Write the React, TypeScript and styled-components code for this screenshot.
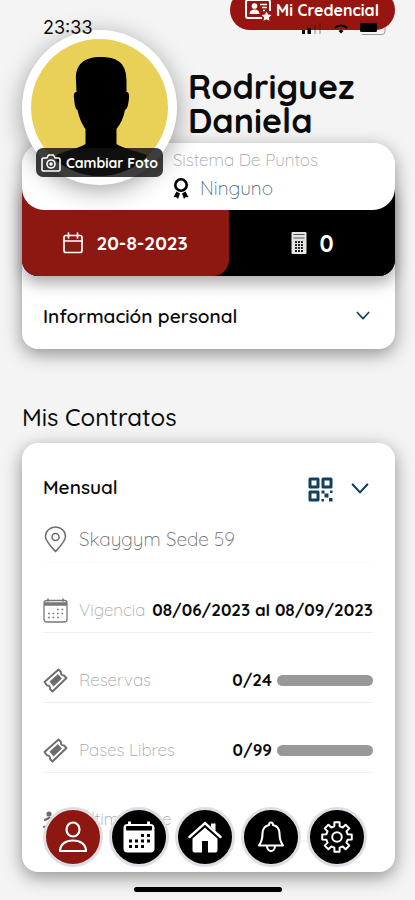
import React from "react";
import styled, { createGlobalStyle } from "styled-components";

const red = "#8c1811";
const navy = "#12405f";

const GlobalStyle = createGlobalStyle`
  * { box-sizing: border-box; }
  body {
    margin: 0;
    background: #f4f4f4;
    color: #0b0b0b;
    font-family: Quicksand, Lato, "Open Sans", sans-serif;
  }
  button { font-family: inherit; border: 0; padding: 0; background: none; cursor: pointer; }
  h1, h2, h3, p { margin: 0; padding: 0; }
  svg { display: block; flex: none; }
`;

const Page = styled.main`
  position: relative;
  min-height: 100vh;
  padding: 0 20px 28px 22px;
  overflow: hidden;
`;

const StatusBar = styled.header`
  display: flex;
  justify-content: space-between;
  align-items: flex-end;
  height: 38px;
  padding: 0 8px 0 21px;
`;

const Clock = styled.time`
  position: relative;
  z-index: 4;
  font-family: Inter, sans-serif;
  font-size: 18px;
  line-height: 20px;
`;

const StatusIcons = styled.div`
  position: relative;
  z-index: 4;
  display: flex;
  align-items: flex-start;
  gap: 12px;
  height: 15px;
`;

const CredentialButton = styled.button`
  position: absolute;
  z-index: 3;
  top: -10px;
  right: 20px;
  display: flex;
  align-items: center;
  gap: 4px;
  height: 40px;
  padding: 0 16px 0 15px;
  border-radius: 20px;
  background: #961510;
  color: #fff;
  font-size: 16px;
  font-weight: 700;
  white-space: nowrap;
`;

const Profile = styled.section`
  position: relative;
`;

const AvatarFrame = styled.div`
  position: absolute;
  z-index: 3;
  top: -8px;
  left: 0;
  width: 155px;
  height: 155px;
  padding: 9px;
  border-radius: 50%;
  background: #fff;
  box-shadow: 0 5px 24px rgba(0, 0, 0, 0.36);

  svg { border-radius: 50%; }
`;

const PhotoButton = styled.button`
  position: absolute;
  z-index: 4;
  top: 110px;
  left: 14px;
  display: flex;
  align-items: center;
  justify-content: center;
  gap: 5px;
  width: 127px;
  height: 29px;
  border-radius: 7px;
  background: rgba(18, 18, 18, 0.82);
  color: #fff;
  font-size: 14px;
  font-weight: 700;
  white-space: nowrap;
`;

const Name = styled.h1`
  height: 105px;
  padding: 32px 0 0 166px;
  font-size: 34px;
  font-weight: 700;
  line-height: 34px;
`;

const Card = styled.div`
  border-radius: 16px;
  background: #fff;
  box-shadow: 0 5px 18px rgba(0, 0, 0, 0.42);
`;

const ProfileCard = styled(Card)`
  border-radius: 22px 22px 16px 16px;
`;

const Points = styled.div`
  position: relative;
  z-index: 2;
  height: 67px;
  padding: 6px 0 0 151px;
  border-radius: 22px;
  background: #fff;
`;

const PointsLabel = styled.p`
  color: #a6a6a6;
  font-size: 17px;
  font-weight: 300;
  line-height: 22px;
`;

const PointsValue = styled.p`
  display: flex;
  align-items: center;
  gap: 11px;
  padding-top: 4px;
  color: #4d6878;
  font-size: 19px;
  font-weight: 300;
  line-height: 26px;
`;

const Stats = styled.div`
  display: grid;
  grid-template-columns: 5fr 4fr;
  height: 90px;
  margin-top: -24px;
  border-radius: 0 0 16px 16px;
  background: #000;
  box-shadow: 0 7px 16px rgba(0, 0, 0, 0.34);
`;

const Stat = styled.div<{ $accent?: boolean }>`
  display: flex;
  align-items: center;
  justify-content: center;
  gap: 13px;
  padding-top: 24px;
  border-radius: 0 0 16px 16px;
  background: ${(p) => (p.$accent ? red : "#000")};
  color: #fff;
  font-size: ${(p) => (p.$accent ? "19px" : "23px")};
  font-weight: 700;
`;

const InfoToggle = styled.button`
  display: flex;
  align-items: center;
  justify-content: space-between;
  width: 100%;
  height: 73px;
  padding: 6px 25px 0 21px;
  color: #0b0b0b;
  font-size: 19px;
  font-weight: 600;
`;

const SectionTitle = styled.h2`
  margin: 54px 0 11px;
  font-size: 24px;
  font-weight: 500;
  line-height: 29px;
`;

const ContractCard = styled(Card)`
  padding: 30px 22px 39px 21px;
`;

const ContractHeader = styled.div`
  display: flex;
  align-items: center;
  justify-content: space-between;
  height: 28px;
`;

const ContractName = styled.h3`
  font-size: 19px;
  font-weight: 600;
`;

const Actions = styled.div`
  display: flex;
  align-items: center;
  gap: 18px;
  padding: 4px 4px 0 0;
`;

const Row = styled.div<{ $first?: boolean; $last?: boolean }>`
  display: flex;
  align-items: center;
  padding: ${(p) => (p.$first ? "24px 0 9px" : p.$last ? "32px 0 0" : "33px 0 8px")};
  border-bottom: ${(p) => (p.$last ? "0" : `1px solid ${p.$first ? "#fafafa" : "#f0f0f0"}`)};
  font-size: 17px;
  line-height: 28px;
  white-space: nowrap;
`;

const RowLabel = styled.span<{ $dark?: boolean }>`
  margin-left: 11px;
  color: ${(p) => (p.$dark ? "#6a6a6a" : "#a9a9a9")};
  font-size: ${(p) => (p.$dark ? "19px" : "17px")};
  font-weight: 300;
`;

const RowValue = styled.span`
  margin-left: auto;
  font-weight: 700;
`;

const Meter = styled.span`
  width: 96px;
  height: 11px;
  margin-left: 5px;
  border-radius: 6px;
  background: #989898;
`;

const TabBar = styled.nav`
  position: fixed;
  z-index: 5;
  bottom: 33px;
  left: 43px;
  display: flex;
  gap: 6px;
`;

const Tab = styled.button<{ $active?: boolean }>`
  display: grid;
  place-items: center;
  width: 60px;
  height: 60px;
  border: 3px solid #dedee3;
  border-radius: 50%;
  background: ${(p) => (p.$active ? red : "#000")};
  color: #fff;
`;

const HomeIndicator = styled.div`
  position: fixed;
  bottom: 8px;
  left: 50%;
  width: 148px;
  height: 5px;
  margin-left: -74px;
  border-radius: 3px;
  background: #000;
`;

const Chevron = ({ size, color }: { size: number; color: string }) => (
  <svg width={size} height={size} viewBox="0 0 16 16" fill="none" stroke={color} strokeWidth="1.9" strokeLinecap="round" strokeLinejoin="round">
    <path d="M1.500 4 8 11 14.500 4" />
  </svg>
);

const CredentialIcon = () => (
  <svg width="27" height="24" viewBox="0 0 27 24" fill="none" stroke="#fff" strokeWidth="2">
    <path d="M17 20H3a2 2 0 0 1-2-2V4a2 2 0 0 1 2-2h20a2 2 0 0 1 2 2v9" />
    <circle cx="9.500" cy="8" r="2.800" fill="#fff" stroke="none" />
    <path d="M4.500 16c0-3 2-4.500 5-4.500s5 1.500 5 4.500z" fill="#fff" stroke="none" />
    <path d="M15 6.500h7M17 9.500h5M18 12.500h2" strokeWidth="1.400" />
    <path d="m21.500 13.500 1.500 3 3.400.5-2.500 2.400.6 3.400-3-1.600-3 1.600.6-3.400-2.500-2.400 3.400-.5z" fill="#fff" stroke="none" />
  </svg>
);

const Signal = () => (
  <svg width="20" height="11" viewBox="0 0 20 11">
    <path d="M0 7h3v4H0zM5.500 5h3.500v6H5.500z" fill="#000" />
    <path d="M12 2h2v9h-2zM17 0h2v11h-2z" fill="#000" opacity=".22" />
  </svg>
);

const Wifi = () => (
  <svg width="14" height="11" viewBox="0 0 14 11">
    <path d="M1 5a8.500 8.500 0 0 1 12 0" fill="none" stroke="#000" strokeWidth="2.200" />
    <path d="M7 10.500 4.500 8a4 4 0 0 1 5 0z" fill="#000" />
  </svg>
);

const Battery = () => (
  <svg width="27" height="13" viewBox="0 0 27 13">
    <path d="M2 11.500h20a3 3 0 0 0 3-3V4" fill="none" stroke="#999" strokeWidth="1" />
    <rect x="0" y="0" width="17" height="9" rx="1.500" fill="#000" />
  </svg>
);

const Silhouette = () => (
  <svg width="137" height="137" viewBox="0 0 137 137" role="img" aria-label="Foto de perfil">
    <rect width="137" height="137" fill="#e9d158" />
    <path d="M70 18c-19 0-26 9-25 24l.500 11c-2.500 0-3 3-2.500 6 .500 5 1 11 3.500 12 2 9 5 15 8 19v15c-6 4-18 6-29 11v25h90v-25c-13-5-24-7-30-11V90c4-5 7-11 8.500-19 3-1 3.500-8 4-12 .3-4-.5-6-2.500-6V42c0-16-7-24-25.500-24z" fill="#000" />
  </svg>
);

const Camera = () => (
  <svg width="20" height="18" viewBox="0 0 20 18" fill="none" stroke="#fff" strokeWidth="1.600" strokeLinejoin="round">
    <path d="M1 5.500a1.500 1.500 0 0 1 1.500-1.500H6l1.500-3h5L14 4h3.500A1.500 1.500 0 0 1 19 5.500v10a1.500 1.500 0 0 1-1.500 1.500h-15A1.500 1.500 0 0 1 1 15.500z" />
    <circle cx="10" cy="10" r="4" />
    <circle cx="10" cy="10" r="1" />
  </svg>
);

const Award = () => (
  <svg width="16" height="21" viewBox="0 0 16 21">
    <circle cx="8" cy="7" r="5.700" fill="none" stroke="#000" strokeWidth="2.600" />
    <path d="m3.500 13.500 3.500 2-2 5.500-1.800-2-2.700.3zM12.500 13.500l-3.500 2 2 5.500 1.800-2 2.700.3z" fill="#000" />
  </svg>
);

const OutlineCalendar = () => (
  <svg width="20" height="22" viewBox="0 0 20 22" fill="none" stroke="#fff" strokeWidth="1.700" strokeLinecap="round">
    <rect x="1" y="3.500" width="18" height="17" rx="2" />
    <path d="M1 9h18M5.500 1v5M14.500 1v5" />
  </svg>
);

const Calculator = () => (
  <svg width="16" height="22" viewBox="0 0 16 22">
    <rect x=".500" width="15" height="22" rx="1" fill="#e4e4e4" />
    <path d="M2.500 2.500h11M2.500 6h11" stroke="#555" strokeWidth="1" />
    <path d="M4 10h8M4 13h8M4 16h8M4 19h8" stroke="#222" strokeWidth="1.800" strokeDasharray="2 1" />
  </svg>
);

const QrCode = () => (
  <svg width="25" height="25" viewBox="0 0 25 25" fill="none" stroke={navy} strokeWidth="3">
    <path d="M2 2h8v8H2zM15 2h8v8h-8zM2 15h8v8H2z" strokeLinejoin="round" />
    <path d="M13.500 13.500h3v3h-3zM16.500 16.500h4v4h-4zM22 13.500h2.500v2.500H22zM13.500 22H16v2.500h-2.500zM21 21h3.500v3.500H21z" fill={navy} stroke="none" />
  </svg>
);

const Pin = () => (
  <svg width="25" height="27" viewBox="0 0 25 27" fill="none" stroke="#6c6c6c" strokeWidth="1.500">
    <path d="M12.500 25.500C7 19.500 2.500 15 2.500 10.500a10 9.500 0 0 1 20 0c0 4.500-4.500 9-10 15z" />
    <circle cx="12.500" cy="11" r="3.500" />
  </svg>
);

const ValidityIcon = () => (
  <svg width="25" height="25" viewBox="0 0 25 25" fill="none" stroke="#777">
    <rect x="1" y="2.500" width="23" height="21.500" rx="2.500" strokeWidth="1.300" />
    <path d="M1 6h23" strokeWidth="3.500" />
    <path d="M5 .500v3M20 .500v3" strokeWidth="1.600" />
    <g strokeWidth="1.700">
      <path d="M14 11.500h1.700M18.500 11.500h1.700" />
      <path d="M5 15.500h1.700M9.500 15.500h1.700M14 15.500h1.700M18.500 15.500h1.700" />
      <path d="M5 19.500h1.700M9.500 19.500h1.700M14 19.500h1.700" />
    </g>
  </svg>
);

const ScheduleIcon = () => (
  <svg width="32" height="32" viewBox="0 0 32 32">
    <rect x=".500" y="3" width="31" height="28.500" rx="4" fill="#fff" />
    <path d="M5 .500h3V4H5zM24 .500h3V4h-3z" fill="#fff" />
    <rect x="3" y="5" width="26" height="4.500" rx="1" fill="#000" />
    <g stroke="#000" strokeWidth="3">
      <path d="M18 14.500h3M24 14.500h3" />
      <path d="M6 20h3M12 20h3M18 20h3M24 20h3" />
      <path d="M6 25.500h3M12 25.500h3M18 25.500h3" />
    </g>
  </svg>
);

const Ticket = () => (
  <svg width="25" height="25" viewBox="0 0 25 25" fill="none" stroke="#6c6c6c" strokeWidth="1.900" strokeLinejoin="round">
    <path d="M1.500 14 15.500 1.500l2.500 2.500c-.5 2 .5 3.500 3 3.500L23.500 10 9.500 23.500 7 21c.5-2-1-4-3-3.500z" />
    <path d="M7 13.500 15 6.500l3.500 4-8 7.500z" fill="#6c6c6c" strokeWidth=".8" />
  </svg>
);

const Runner = () => (
  <svg width="25" height="25" viewBox="0 0 25 25" fill="none" stroke="#6c6c6c" strokeWidth="2.200" strokeLinecap="round">
    <circle cx="6" cy="7" r="1.500" fill="#6c6c6c" />
    <path d="m2 13 4-2 6 1 4 5M9 13l-4 6-4 1M9 18l5 5" />
  </svg>
);

const PersonIcon = () => (
  <svg width="30" height="32" viewBox="0 0 30 32" fill="none" stroke="#fff" strokeWidth="2.200">
    <ellipse cx="15" cy="8.500" rx="6.500" ry="7" />
    <path d="M2 30C2 23 8 19.500 15 19.500S28 23 28 30z" strokeLinejoin="round" />
  </svg>
);

const HouseIcon = () => (
  <svg width="34" height="32" viewBox="0 0 34 32">
    <path d="M23 2.500h4.500V10L23 6z" fill="#fff" />
    <path d="M4.500 17 17 6l12.500 11v12.500q0 2-2 2H20V20h-6v11.500H6.500q-2 0-2-2z" fill="#fff" />
    <path d="M1.500 18 17 4.500 32.500 18" fill="none" stroke="#000" strokeWidth="3" />
    <path d="M1.500 16 17 2.200 32.500 16" fill="none" stroke="#fff" strokeWidth="2.400" strokeLinecap="round" />
  </svg>
);

const BellIcon = () => (
  <svg width="28" height="32" viewBox="0 0 28 32" fill="none" stroke="#fff" strokeWidth="2.100" strokeLinejoin="round">
    <path d="M14 1.500c-1.500 0-2 1-2 2.500-4 1-6.500 4-6.500 8.500 0 6-1 8.500-3.500 12h24c-2.500-3.500-3.500-6-3.500-12 0-4.500-2.500-7.500-6.500-8.500 0-1.500-.5-2.500-2-2.500z" />
    <path d="M10 24.500c0 7.500 8 7.500 8 0" />
  </svg>
);

const gearPath = [0, 45, 90, 135, 180, 225, 270, 315]
  .map((deg, i) => {
    const point = (r: number, a: number) => {
      const t = ((deg + a) * Math.PI) / 180;
      return `${(16 + r * Math.cos(t)).toFixed(2)} ${(16 + r * Math.sin(t)).toFixed(2)}`;
    };
    return `${i ? "L" : "M"}${point(11, -14)}L${point(15, -10)}L${point(15, 10)}L${point(11, 14)}`;
  })
  .join("");

const GearIcon = () => (
  <svg width="32" height="32" viewBox="0 0 32 32" fill="none" stroke="#fff" strokeWidth="2" strokeLinejoin="round">
    <path d={`${gearPath}Z`} />
    <circle cx="16" cy="16" r="4.800" />
  </svg>
);

export default function App() {
  return (
    <>
      <GlobalStyle />
      <Page>
        <StatusBar>
          <Clock>23:33</Clock>
          <StatusIcons aria-hidden="true">
            <Signal />
            <Wifi />
            <Battery />
          </StatusIcons>
        </StatusBar>
        <CredentialButton type="button">
          <CredentialIcon />
          Mi Credencial
        </CredentialButton>

        <Profile>
          <AvatarFrame>
            <Silhouette />
          </AvatarFrame>
          <PhotoButton type="button">
            <Camera />
            Cambiar Foto
          </PhotoButton>
          <Name>
            Rodriguez
            <br />
            Daniela
          </Name>
          <ProfileCard>
            <Points>
              <PointsLabel>Sistema De Puntos</PointsLabel>
              <PointsValue>
                <Award />
                Ninguno
              </PointsValue>
            </Points>
            <Stats>
              <Stat $accent>
                <OutlineCalendar />
                20-8-2023
              </Stat>
              <Stat>
                <Calculator />0
              </Stat>
            </Stats>
            <InfoToggle type="button" aria-expanded="false">
              Información personal
              <Chevron size={14} color={navy} />
            </InfoToggle>
          </ProfileCard>
        </Profile>

        <section>
          <SectionTitle>Mis Contratos</SectionTitle>
          <ContractCard>
            <ContractHeader>
              <ContractName>Mensual</ContractName>
              <Actions>
                <button type="button" aria-label="Código QR">
                  <QrCode />
                </button>
                <button type="button" aria-label="Contraer contrato">
                  <Chevron size={18} color={navy} />
                </button>
              </Actions>
            </ContractHeader>
            <Row $first>
              <Pin />
              <RowLabel $dark>Skaygym Sede 59</RowLabel>
            </Row>
            <Row>
              <ValidityIcon />
              <RowLabel>Vigencia</RowLabel>
              <RowValue>08/06/2023 al 08/09/2023</RowValue>
            </Row>
            <Row>
              <Ticket />
              <RowLabel>Reservas</RowLabel>
              <RowValue>0/24</RowValue>
              <Meter role="meter" aria-label="Reservas" aria-valuenow={0} aria-valuemin={0} aria-valuemax={24} />
            </Row>
            <Row>
              <Ticket />
              <RowLabel>Pases Libres</RowLabel>
              <RowValue>0/99</RowValue>
              <Meter role="meter" aria-label="Pases Libres" aria-valuenow={0} aria-valuemin={0} aria-valuemax={99} />
            </Row>
            <Row $last>
              <Runner />
              <RowLabel>Último Pase</RowLabel>
            </Row>
          </ContractCard>
        </section>

        <TabBar aria-label="Principal">
          <Tab type="button" $active aria-label="Perfil">
            <PersonIcon />
          </Tab>
          <Tab type="button" aria-label="Calendario">
            <ScheduleIcon />
          </Tab>
          <Tab type="button" aria-label="Inicio">
            <HouseIcon />
          </Tab>
          <Tab type="button" aria-label="Notificaciones">
            <BellIcon />
          </Tab>
          <Tab type="button" aria-label="Ajustes">
            <GearIcon />
          </Tab>
        </TabBar>
        <HomeIndicator />
      </Page>
    </>
  );
}
